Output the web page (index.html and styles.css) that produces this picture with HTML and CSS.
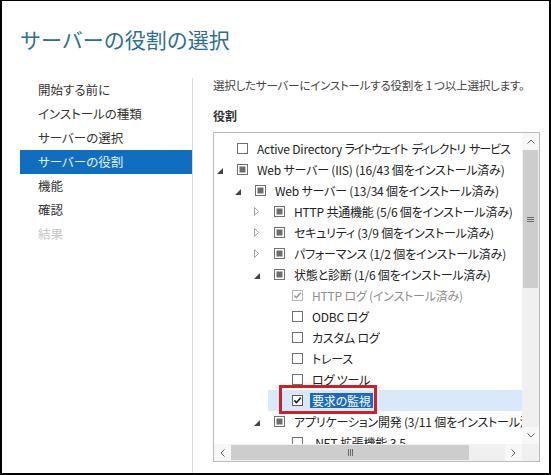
FILE: index.html
```html
<!DOCTYPE html>
<html lang="ja">
<head>
<meta charset="utf-8">
<title>サーバーの役割の選択</title>
<link rel="stylesheet" href="styles.css">
</head>
<body>
<div class="frame">
  <header class="hdr"><h1 class="title">サーバーの役割の選択</h1></header>
  <div class="main">
    <nav class="steps">
      <div class="step">開始する前に</div>
      <div class="step">インストールの種類</div>
      <div class="step">サーバーの選択</div>
      <div class="step active">サーバーの役割</div>
      <div class="step">機能</div>
      <div class="step">確認</div>
      <div class="step disabled">結果</div>
    </nav>
    <section class="content">
      <p class="desc">選択したサーバーにインストールする役割を 1 つ以上選択します。</p>
      <h2 class="label">役割</h2>
      <div class="tree-box">
        <div class="viewport">
          <ul class="tree">
            <li class="row l0"><span class="tw"></span><svg class="cb" viewBox="0 0 11 11"><rect x="0.5" y="0.5" width="10" height="10" fill="#fff" stroke="#6f6f6f"/></svg><span class="txt">Active Directory <span class="tight">ライトウェイト ディレクトリ サービス</span></span></li>
            <li class="row l0"><span class="tw"><svg class="exp" width="6" height="6" viewBox="0 0 6 6"><path d="M6 0V6H0Z" fill="#444"/></svg></span><svg class="cb" viewBox="0 0 11 11"><rect x="0.5" y="0.5" width="10" height="10" fill="#fff" stroke="#6f6f6f"/><rect x="2.5" y="2.5" width="6" height="6" fill="#6d6d6d"/></svg><span class="txt">Web サーバー (IIS) (16/43 個をインストール済み)</span></li>
            <li class="row l1"><span class="tw"><svg class="exp" width="6" height="6" viewBox="0 0 6 6"><path d="M6 0V6H0Z" fill="#444"/></svg></span><svg class="cb" viewBox="0 0 11 11"><rect x="0.5" y="0.5" width="10" height="10" fill="#fff" stroke="#6f6f6f"/><rect x="2.5" y="2.5" width="6" height="6" fill="#6d6d6d"/></svg><span class="txt">Web サーバー (13/34 個をインストール済み)</span></li>
            <li class="row l2"><span class="tw"><svg class="col" width="5" height="9" viewBox="0 0 5 9"><path d="M0.5 0.5L4.5 4.5L0.5 8.5Z" fill="none" stroke="#a3a3a3"/></svg></span><svg class="cb" viewBox="0 0 11 11"><rect x="0.5" y="0.5" width="10" height="10" fill="#fff" stroke="#6f6f6f"/><rect x="2.5" y="2.5" width="6" height="6" fill="#6d6d6d"/></svg><span class="txt">HTTP 共通機能 (5/6 個をインストール済み)</span></li>
            <li class="row l2"><span class="tw"><svg class="col" width="5" height="9" viewBox="0 0 5 9"><path d="M0.5 0.5L4.5 4.5L0.5 8.5Z" fill="none" stroke="#a3a3a3"/></svg></span><svg class="cb" viewBox="0 0 11 11"><rect x="0.5" y="0.5" width="10" height="10" fill="#fff" stroke="#6f6f6f"/><rect x="2.5" y="2.5" width="6" height="6" fill="#6d6d6d"/></svg><span class="txt">セキュリティ (3/9 個をインストール済み)</span></li>
            <li class="row l2"><span class="tw"><svg class="col" width="5" height="9" viewBox="0 0 5 9"><path d="M0.5 0.5L4.5 4.5L0.5 8.5Z" fill="none" stroke="#a3a3a3"/></svg></span><svg class="cb" viewBox="0 0 11 11"><rect x="0.5" y="0.5" width="10" height="10" fill="#fff" stroke="#6f6f6f"/><rect x="2.5" y="2.5" width="6" height="6" fill="#6d6d6d"/></svg><span class="txt">パフォーマンス (1/2 個をインストール済み)</span></li>
            <li class="row l2"><span class="tw"><svg class="exp" width="6" height="6" viewBox="0 0 6 6"><path d="M6 0V6H0Z" fill="#444"/></svg></span><svg class="cb" viewBox="0 0 11 11"><rect x="0.5" y="0.5" width="10" height="10" fill="#fff" stroke="#6f6f6f"/><rect x="2.5" y="2.5" width="6" height="6" fill="#6d6d6d"/></svg><span class="txt">状態と診断 (1/6 個をインストール済み)</span></li>
            <li class="row l3 muted"><span class="tw"></span><svg class="cb" viewBox="0 0 11 11"><rect x="0.5" y="0.5" width="10" height="10" fill="#fff" stroke="#b5b5b5"/><path d="M2.3 5.4L4.4 7.6L8.8 2.8" fill="none" stroke="#9a9a9a" stroke-width="1.5"/></svg><span class="txt">HTTP ログ (インストール済み)</span></li>
            <li class="row l3"><span class="tw"></span><svg class="cb" viewBox="0 0 11 11"><rect x="0.5" y="0.5" width="10" height="10" fill="#fff" stroke="#6f6f6f"/></svg><span class="txt">ODBC ログ</span></li>
            <li class="row l3"><span class="tw"></span><svg class="cb" viewBox="0 0 11 11"><rect x="0.5" y="0.5" width="10" height="10" fill="#fff" stroke="#6f6f6f"/></svg><span class="txt">カスタム ログ</span></li>
            <li class="row l3"><span class="tw"></span><svg class="cb" viewBox="0 0 11 11"><rect x="0.5" y="0.5" width="10" height="10" fill="#fff" stroke="#6f6f6f"/></svg><span class="txt">トレース</span></li>
            <li class="row l3"><span class="tw"></span><svg class="cb" viewBox="0 0 11 11"><rect x="0.5" y="0.5" width="10" height="10" fill="#fff" stroke="#6f6f6f"/></svg><span class="txt">ログ ツール</span></li>
            <li class="row l3 sel"><span class="tw"></span><svg class="cb" viewBox="0 0 11 11"><rect x="0.5" y="0.5" width="10" height="10" fill="#fff" stroke="#5a5a5a"/><path d="M2.3 5.4L4.4 7.6L8.8 2.8" fill="none" stroke="#1e1e1e" stroke-width="1.6"/></svg><span class="txt">要求の監視</span></li>
            <li class="row l2"><span class="tw"><svg class="exp" width="6" height="6" viewBox="0 0 6 6"><path d="M6 0V6H0Z" fill="#444"/></svg></span><svg class="cb" viewBox="0 0 11 11"><rect x="0.5" y="0.5" width="10" height="10" fill="#fff" stroke="#6f6f6f"/><rect x="2.5" y="2.5" width="6" height="6" fill="#6d6d6d"/></svg><span class="txt">アプリケーション開発 (3/11 個をインストール済み)</span></li>
            <li class="row l3"><span class="tw"></span><svg class="cb" viewBox="0 0 11 11"><rect x="0.5" y="0.5" width="10" height="10" fill="#fff" stroke="#6f6f6f"/></svg><span class="txt">.NET 拡張機能 3.5</span></li>
          </ul>
        </div>
        <div class="vscroll">
          <div class="sbtn"><svg width="8" height="5" viewBox="0 0 8 5"><polyline points="0.5,4.5 4,1 7.5,4.5" fill="none" stroke="#606060"/></svg></div>
          <div class="vthumb"><svg width="7" height="5" viewBox="0 0 7 5"><path d="M0 0.5H7M0 2.5H7M0 4.5H7" stroke="#6a6a6a"/></svg></div>
          <div class="vtrack"></div>
          <div class="sbtn"><svg width="8" height="5" viewBox="0 0 8 5"><polyline points="0.5,0.5 4,4 7.5,0.5" fill="none" stroke="#606060"/></svg></div>
        </div>
        <div class="hscroll">
          <div class="sbtn"><svg width="5" height="8" viewBox="0 0 5 8"><polyline points="4.5,0.5 1,4 4.5,7.5" fill="none" stroke="#606060"/></svg></div>
          <div class="hthumb"><svg width="5" height="7" viewBox="0 0 5 7"><path d="M0.5 0V7M2.5 0V7M4.5 0V7" stroke="#6a6a6a"/></svg></div>
          <div class="htrack"></div>
          <div class="sbtn"><svg width="5" height="8" viewBox="0 0 5 8"><polyline points="0.5,0.5 4,4 0.5,7.5" fill="none" stroke="#606060"/></svg></div>
        </div>
        <div class="corner"></div>
      </div>
    </section>
  </div>
  <div class="callout"></div>
</div>
</body>
</html>
```

FILE: styles.css
```css
body {
  margin: 0;
  background: #fff;
}

.frame {
  position: relative;
  width: 551px;
  height: 475px;
  box-sizing: border-box;
  border: 2px solid #000;
  border-top-width: 1px;
  overflow: hidden;
  display: flex;
  flex-direction: column;
  background: #fff;
  font-family: "Noto Sans CJK JP", "Noto Sans", sans-serif;
  color: #333;
}

.hdr {
  height: 77px;
  flex: none;
  box-sizing: border-box;
  padding: 23px 0 0 18px;
}

.title {
  margin: 0;
  font-size: 21px;
  font-weight: normal;
  line-height: 30px;
  color: #2b6f92;
}

.main {
  flex: 1;
  display: flex;
  min-height: 0;
}

.steps {
  width: 191px;
  flex: none;
  box-sizing: border-box;
  border-right: 1px solid #dadada;
}

.step {
  margin-left: 18px;
  padding-left: 18px;
  height: 24px;
  line-height: 24px;
  font-size: 12.5px;
  color: #333;
  font-feature-settings: "palt";
}

.step.active {
  background: #0f6fbe;
  color: #e6f2ff;
}

.step.disabled {
  color: #c6c6c6;
}

.content {
  flex: 1;
  min-width: 0;
  padding-left: 20px;
}

.desc {
  margin: 0;
  font-size: 11.6px;
  line-height: 14px;
  letter-spacing: -0.3px;
  color: #444;
  font-feature-settings: "palt";
  white-space: nowrap;
}

.label {
  margin: 16px 0 0;
  font-size: 12px;
  font-weight: bold;
  line-height: 16px;
  color: #333;
}

.tree-box {
  margin-top: 8px;
  width: 327px;
  height: 330px;
  box-sizing: border-box;
  border: 1px solid #bcbcbc;
  display: grid;
  grid-template-columns: 1fr 17px;
  grid-template-rows: 1fr 17px;
}

.viewport {
  overflow: hidden;
  padding-top: 5px;
  min-width: 0;
  min-height: 0;
}

.tree {
  list-style: none;
  margin: 0;
  padding: 0;
}

.row {
  height: 21px;
  display: flex;
  align-items: center;
  white-space: nowrap;
  font-size: 12px;
  letter-spacing: -0.2px;
  color: #222;
  font-feature-settings: "palt";
}

.l0 { padding-left: 3px; }
.l1 { padding-left: 21px; }
.l2 { padding-left: 40px; }
.l3 { padding-left: 58px; }

.tw {
  width: 20px;
  flex: none;
  display: flex;
  align-items: center;
}

.tw .exp {
  margin-top: 3px;
}

.cb {
  width: 11px;
  height: 11px;
  flex: none;
  display: block;
}

.txt {
  margin-left: 9px;
}

.tight {
  letter-spacing: -1.1px;
  word-spacing: 2.5px;
}

.row.muted {
  color: #8e8e8e;
}

.row.sel {
  margin-left: 54px;
  padding-left: 4px;
  background: #d9e9f9;
}

.row.sel .txt {
  margin-left: 7px;
  padding: 0 2px;
  line-height: 15px;
  background: #1b6bbd;
  color: #fff;
}

.vscroll {
  display: flex;
  flex-direction: column;
  background: #f0f0f0;
}

.hscroll {
  display: flex;
  background: #f0f0f0;
}

.sbtn {
  width: 17px;
  height: 17px;
  flex: none;
  display: flex;
  align-items: center;
  justify-content: center;
  background: #f7f7f7;
}

.vthumb {
  height: 138px;
  flex: none;
  box-sizing: border-box;
  margin: 0 1px;
  background: #cdcdcd;
  display: flex;
  align-items: center;
  justify-content: center;
}

.vtrack, .htrack {
  flex: 1;
}

.hthumb {
  width: 238px;
  flex: none;
  box-sizing: border-box;
  margin: 1px 0;
  background: #cdcdcd;
  display: flex;
  align-items: center;
  justify-content: center;
}

.corner {
  background: #f0f0f0;
}

.callout {
  position: absolute;
  left: 277px;
  top: 384px;
  width: 98px;
  height: 29px;
  box-sizing: border-box;
  border: 3px solid #c9222b;
}
```
